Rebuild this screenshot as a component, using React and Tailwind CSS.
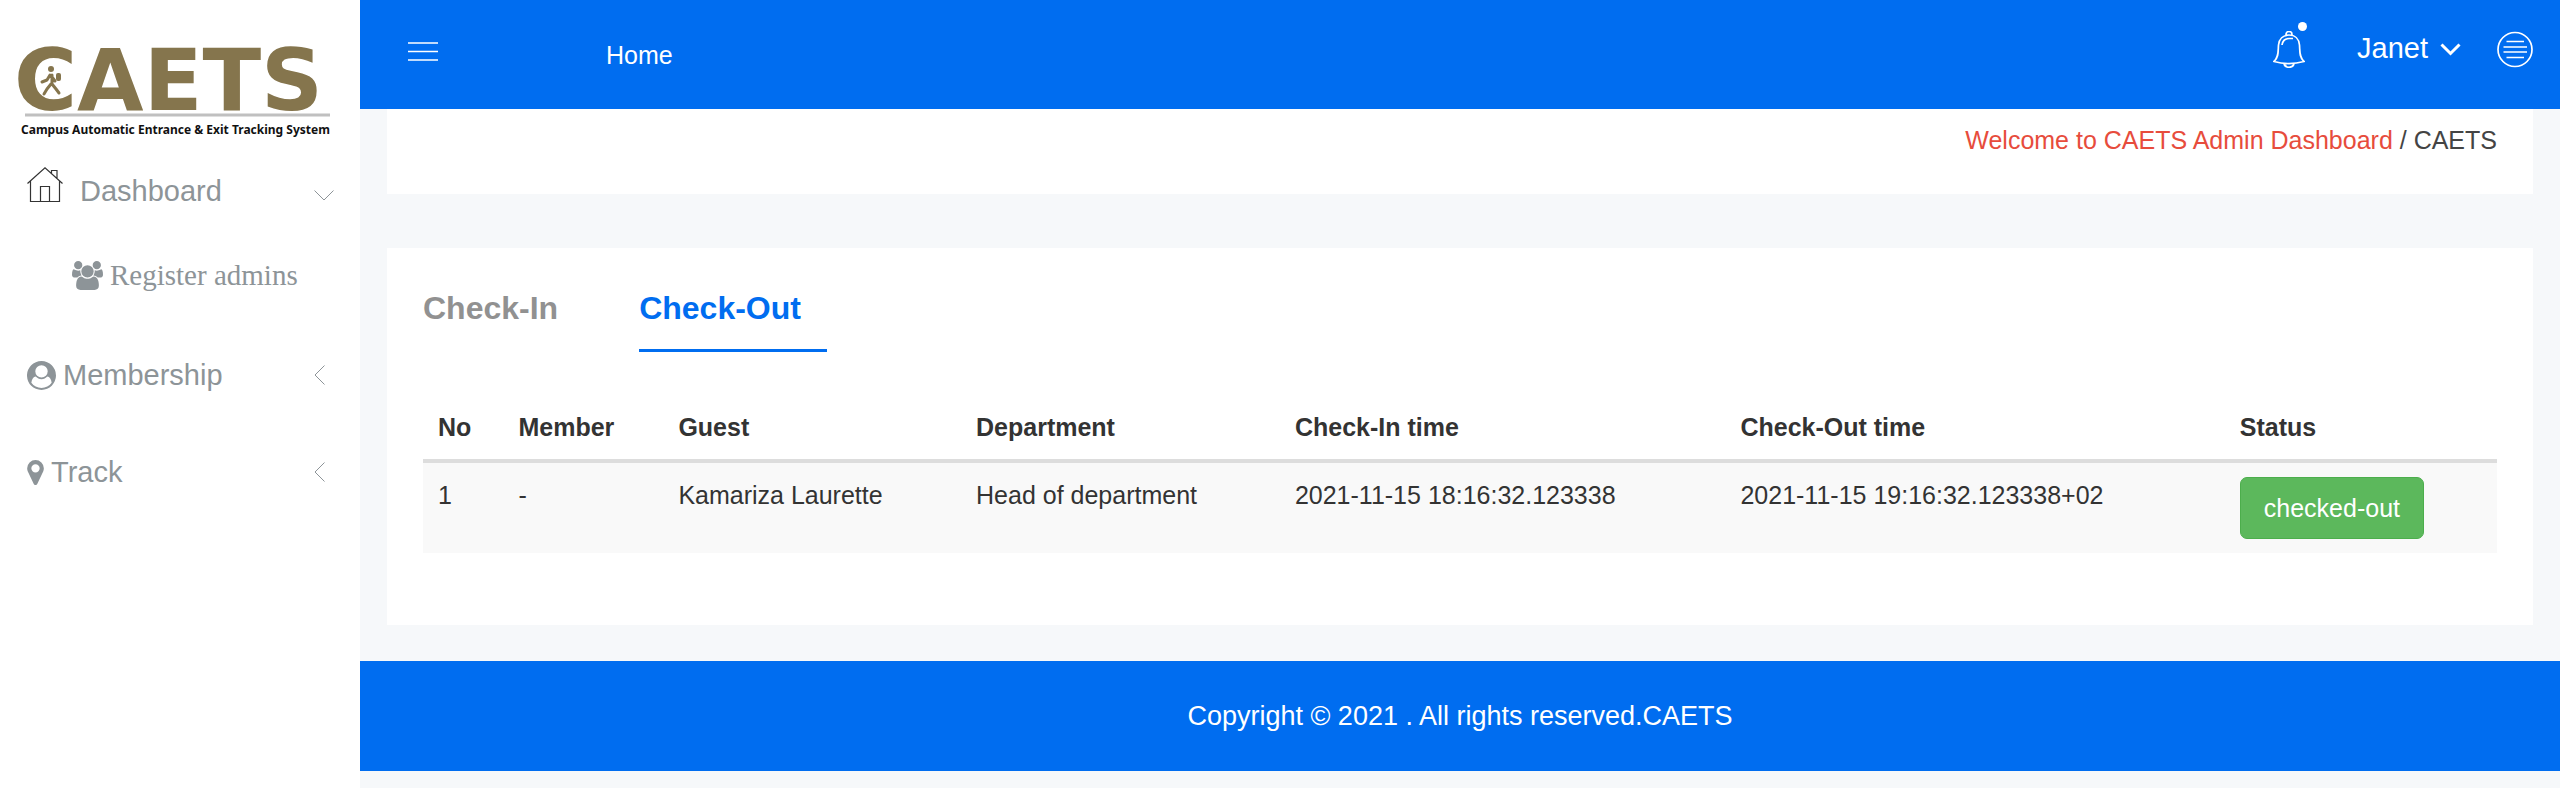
import { useState } from "react";

const BLUE = "text-[#006df0]";

function Logo() {
  return (
    <svg viewBox="0 0 360 150" className="block w-full" role="img" aria-label="CAETS, Campus Automatic Entrance & Exit Tracking System">
      <text x="14" y="110" fontFamily="DejaVu Sans" fontWeight="700" fontSize="86" fill="#85754d">CAETS</text>
      <g fill="none" stroke="#85754d" strokeWidth="3" strokeLinecap="round" strokeLinejoin="round">
        <path d="M52 75v9M50 75l-3 5-5 2M52 77l3 4M51 84l-4 5-3 5M52 84l4 5 3 4" />
      </g>
      <circle cx="51" cy="69" r="3" fill="#85754d" />
      <rect x="56" y="73" width="5" height="8" rx="2" fill="#85754d" />
      <path d="M25 115H330" stroke="#c0c0c0" strokeWidth="3" />
      <text x="21" y="134" fontFamily="Noto Sans" fontWeight="700" fontSize="12" fill="#111">Campus Automatic Entrance &amp; Exit Tracking System</text>
    </svg>
  );
}

function HomeIcon() {
  return (
    <svg width="36" height="36" viewBox="0 0 36 36" fill="none" stroke="#333" strokeWidth="1.200" aria-hidden="true">
      <path d="M.5 16.500L18 .8L35.500 16.500M3.500 14V34.500H32.500V14M13.500 34.500V19.500H22.500V34.500M24.500 6.500V3.500H30V11.500" />
    </svg>
  );
}

function UsersIcon() {
  return (
    <svg width="31" height="29" viewBox="0 0 1920 1792" fill="currentColor" aria-hidden="true">
      <path d="M593 896q-162 5-265 128h-134q-82 0-138-40.500t-56-118.500q0-353 124-353 6 0 43.500 21t97.500 42.500 119 21.500q67 0 133-23-5 37-5 66 0 139 81 256zm1071 637q0 120-73 189.500t-194 69.500h-874q-121 0-194-69.500t-73-189.500q0-53 3.500-103.500t14-109 26.500-108.500 43-97.500 62-81 85.500-53.500 111.500-20q10 0 43 21.500t73 48 107 48 135 21.500 135-21.500 107-48 73-48 43-21.500q61 0 111.500 20t85.500 53.500 62 81 43 97.500 26.500 108.500 14 109 3.500 103.500zm-1024-1277q0 106-75 181t-181 75-181-75-75-181 75-181 181-75 181 75 75 181zm704 384q0 159-112.500 271.500t-271.500 112.500-271.500-112.500-112.500-271.500 112.500-271.500 271.500-112.500 271.500 112.500 112.500 271.500zm576 225q0 78-56 118.500t-138 40.500h-134q-103-123-265-128 81-117 81-256 0-29-5-66 66 23 133 23 59 0 119-21.500t97.500-42.500 43.500-21q124 0 124 353zm-128-609q0 106-75 181t-181 75-181-75-75-181 75-181 181-75 181 75 75 181z" />
    </svg>
  );
}

function UserCircleIcon() {
  return (
    <svg width="29" height="29" viewBox="0 0 1792 1792" fill="currentColor" fillRule="evenodd" aria-hidden="true">
      <path d="M1523 1339q-22-155-87.500-257.500t-184.500-118.500q-67 74-159.500 115.500t-195.500 41.500-195.500-41.500-159.500-115.500q-119 16-184.500 118.500t-87.500 257.500q106 150 271 237.500t356 87.500 356-87.500 271-237.500zm-243-699q0-159-112.500-271.500t-271.500-112.500-271.500 112.500-112.500 271.500 112.500 271.500 271.500 112.500 271.500-112.500 112.500-271.500zm512 256q0 182-71 347.500t-190.500 286-285.500 191.500-349 71-348.500-71-286-191-191-286-71.500-348 71-348 191-286 286-191 348-71 348 71 286 191 191 286 71 348z" />
    </svg>
  );
}

function MarkerIcon() {
  return (
    <svg width="17" height="25" viewBox="0 128 1024 1536" fill="currentColor" fillRule="evenodd" aria-hidden="true">
      <path d="M768 640q0-106-75-181t-181-75-181 75-75 181 75 181 181 75 181-75 75-181zm256 0q0 109-33 179l-364 774q-16 33-47.500 52t-67.500 19-67.500-19-46.500-52l-365-774q-33-70-33-179 0-212 150-362t362-150 362 150 150 362z" />
    </svg>
  );
}

function Arrow({ open }) {
  return open ? (
    <svg className="mt-2 ml-auto" width="20" height="11" viewBox="0 0 20 11" fill="none" stroke="#8d9498" aria-hidden="true">
      <path d="M.5 .5L10 10L19.500 .5" />
    </svg>
  ) : (
    <svg className="mr-[9px] ml-auto" width="11" height="20" viewBox="0 0 11 20" fill="none" stroke="#8d9498" aria-hidden="true">
      <path d="M10.500 .5L1 10L10.500 19.500" />
    </svg>
  );
}

function Sidebar() {
  return (
    <aside className="w-[360px] shrink-0 bg-white text-[29px] leading-[34px] text-[#8d9498]">
      <Logo />
      <nav aria-label="Main" className="pr-[26px] pl-[27px]">
        <a href="#dashboard" className="flex h-[82px] items-center">
          <span className="-mt-3"><HomeIcon /></span>
          <span className="ml-[17px]">Dashboard</span>
          <Arrow open />
        </a>
        <a href="#register" className="flex h-[86px] items-center gap-[7px] pl-[45px] font-['Liberation_Serif',serif]">
          <UsersIcon />
          <span>Register admins</span>
        </a>
        <a href="#membership" className="flex h-[114px] items-center gap-[7px]">
          <UserCircleIcon />
          <span>Membership</span>
          <Arrow />
        </a>
        <a href="#track" className="flex h-20 items-center gap-[7px]">
          <MarkerIcon />
          <span>Track</span>
          <Arrow />
        </a>
      </nav>
    </aside>
  );
}

function TopBar() {
  return (
    <header className="flex h-[109px] items-start bg-[#006df0] pr-[27px] pl-12 text-white">
      <button type="button" aria-label="Toggle menu" className="mt-[42px]">
        <svg width="30" height="19" viewBox="0 0 30 19" stroke="white" strokeWidth="1.700" aria-hidden="true">
          <path d="M0 1H30M0 9.500H30M0 18H30" />
        </svg>
      </button>
      <a href="#home" className="mt-10 ml-[168px] text-[25px] leading-[30px]">Home</a>
      <div className="mt-[31px] ml-auto flex items-center">
        <button type="button" aria-label="Notifications" className="relative">
          <svg width="32" height="37" viewBox="0 0 32 37" fill="none" stroke="white" strokeWidth="1.700" aria-hidden="true">
            <path d="M13 4.500V3.500a3 3 0 0 1 6 0V4.500M1 30.500C6 26 5 20 5.500 14C6 8 10 4 16 4S26 8 26.500 14C27 20 26 26 31 30.500C22 33 10 33 1 30.500ZM11 32.500C12 37.500 20 37.500 21 32.500M9 14C9.500 10 12 7.500 16 7.500H20" />
          </svg>
          <span className="absolute -top-[9px] -right-[2px] size-[9px] rounded-full bg-white" />
        </button>
        <button type="button" className="-mt-1 ml-[52px] flex items-center gap-3 text-[29px] leading-[34px]">
          Janet
          <svg className="mt-1" width="21" height="13" viewBox="0 0 21 13" fill="none" stroke="white" strokeWidth="3" aria-hidden="true">
            <path d="M1.500 1.500L10.500 10.500L19.500 1.500" />
          </svg>
        </button>
        <button type="button" aria-label="Open panel" className="ml-9">
          <svg width="36" height="37" viewBox="0 0 36 37" fill="none" stroke="white" strokeWidth="1.700" aria-hidden="true">
            <circle cx="18" cy="18.500" r="17" />
            <path d="M9.500 10.500H27M6.500 16H30M6.500 21H30M9.500 26.500H27" />
          </svg>
        </button>
      </div>
    </header>
  );
}

const rows = [
  ["1", "-", "Kamariza Laurette", "Head of department", "2021-11-15 18:16:32.123338", "2021-11-15 19:16:32.123338+02", "checked-out"],
];
const heads = ["No", "Member", "Guest", "Department", "Check-In time", "Check-Out time", "Status"];

export default function App() {
  const [tab, setTab] = useState("out");
  return (
    <div className="flex min-h-screen bg-[#f6f8fa] font-['Liberation_Sans',Arial,sans-serif] text-[25px] leading-9 text-[#333]">
      <Sidebar />
      <div className="min-w-0 flex-1">
        <TopBar />
        <main className="px-[27px]">
          <div className="h-[85px] bg-white px-9 pt-[13px] text-right text-[#444]">
            <a href="#welcome" className="text-[#e74c3c]">Welcome to CAETS Admin Dashboard</a> / <span>CAETS</span>
          </div>
          <section className="mt-[54px] bg-white px-9 pt-[37px] pb-[72px]">
            <div role="tablist" className="flex gap-[81px] text-[32px] leading-[46px] font-bold">
              <button type="button" role="tab" aria-selected={tab === "in"} onClick={() => setTab("in")} className={`border-b-[3px] pb-[18px] text-left ${tab === "in" ? "border-[#006df0]" : "border-transparent"} ${tab === "in" ? BLUE : "text-[#919191]"}`}>
                Check-In
              </button>
              <button type="button" role="tab" aria-selected={tab === "out"} onClick={() => setTab("out")} className={`border-b-[3px] pr-[26px] pb-[18px] text-left ${tab === "out" ? "border-[#006df0]" : "border-transparent"} ${tab === "out" ? BLUE : "text-[#919191]"}`}>
                Check-Out
              </button>
            </div>
            <table className="mt-9 w-full border-collapse text-left">
              <thead>
                <tr className="border-b-4 border-[#ddd]">
                  {heads.map((h) => (
                    <th key={h} scope="col" className="px-[15px] pt-[21px] pb-[14px] font-bold">{h}</th>
                  ))}
                </tr>
              </thead>
              <tbody>
                {rows.map((r) => (
                  <tr key={r[0]} className="bg-[#f9f9f9] align-top">
                    {r.slice(0, 6).map((c) => (
                      <td key={c} className="px-[15px] py-[14px]">{c}</td>
                    ))}
                    <td className="px-[15px] py-[14px]">
                      <button type="button" className="block rounded-[7px] border border-[#4cae4c] bg-[#5cb85c] px-[23px] py-3 whitespace-nowrap text-white">{r[6]}</button>
                    </td>
                  </tr>
                ))}
              </tbody>
            </table>
          </section>
        </main>
        <footer className="mt-9 bg-[#006df0] py-9 text-center text-[27px] leading-[38px] text-white">
          Copyright © 2021 . All rights reserved.CAETS
        </footer>
      </div>
    </div>
  );
}
